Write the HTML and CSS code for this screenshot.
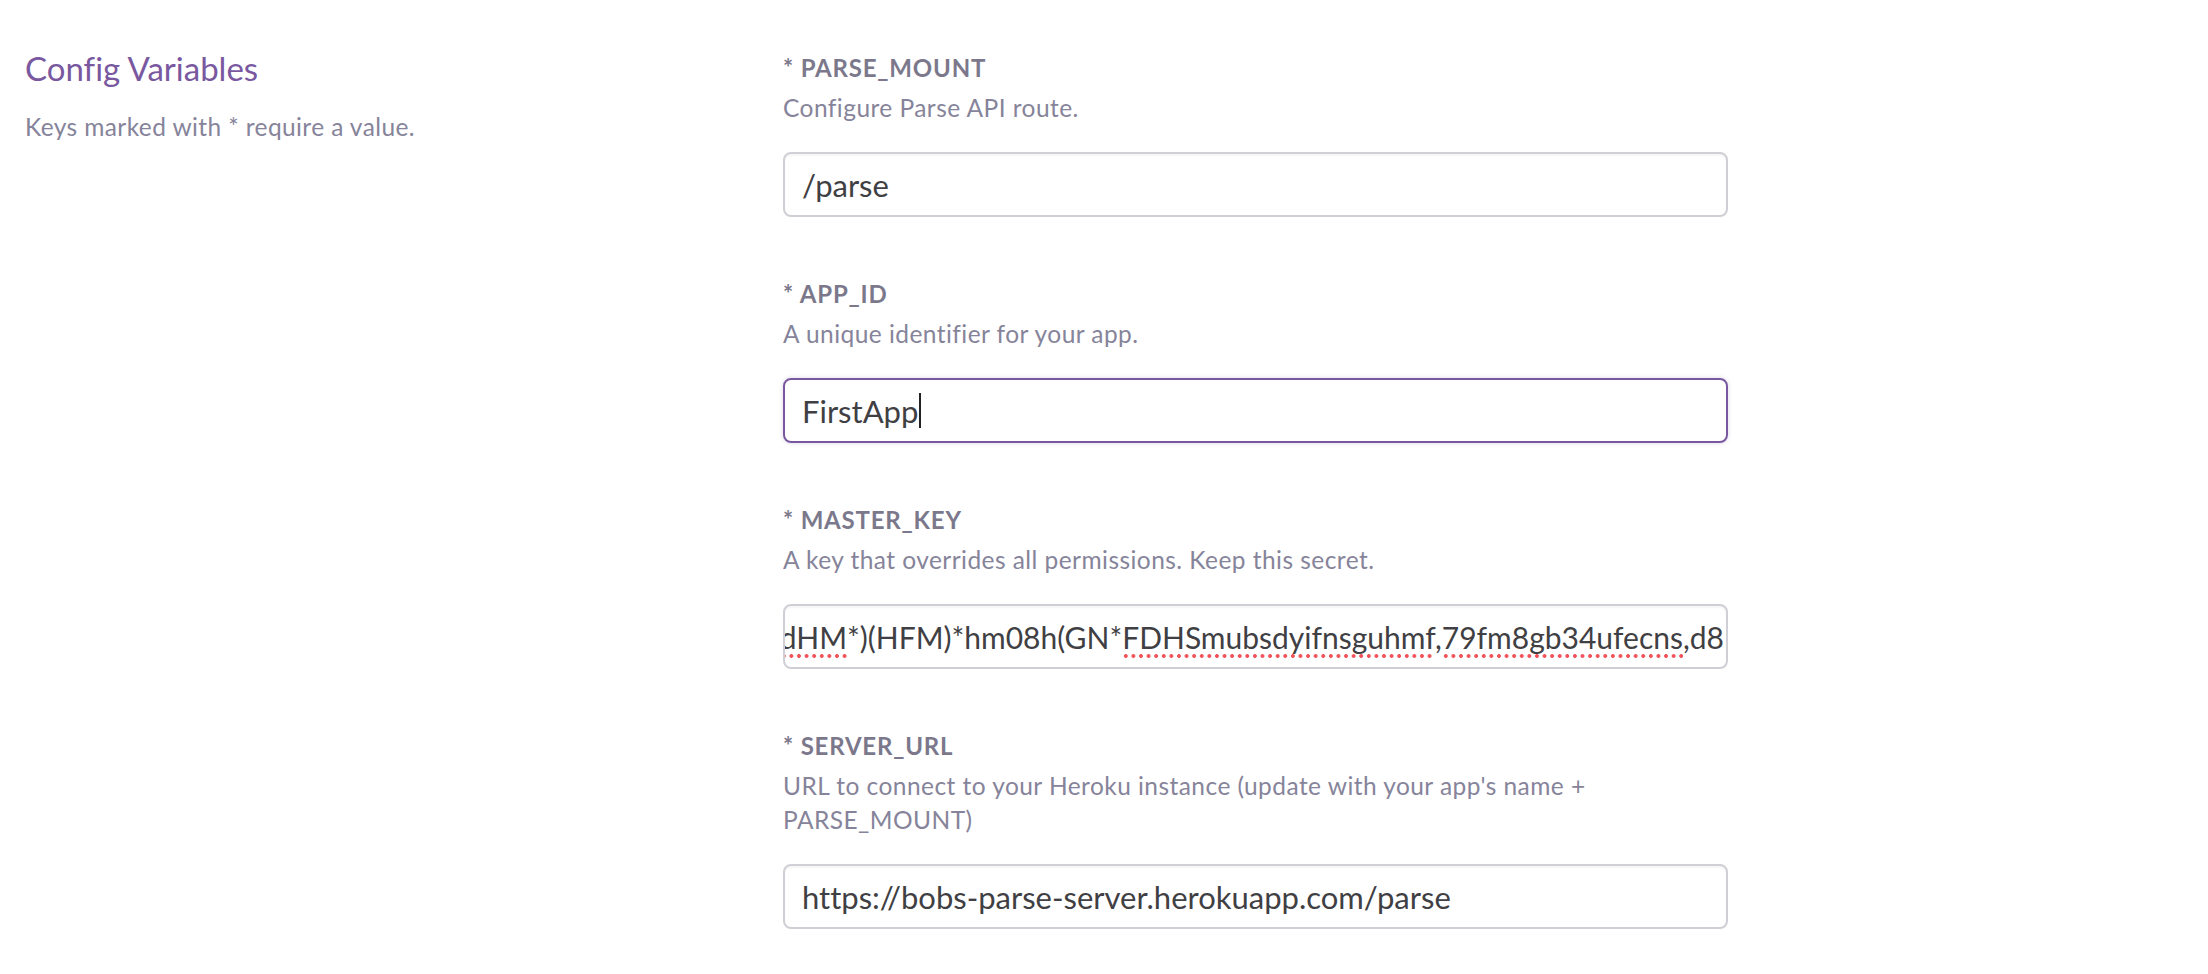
FILE: index.html
```html
<!DOCTYPE html>
<html lang="en">
<head>
<meta charset="utf-8">
<title>Config Variables</title>
<link rel="stylesheet" href="styles.css">
</head>
<body>
<div class="page">
  <aside class="intro">
    <h2 class="intro-title">Config Variables</h2>
    <p class="intro-text">Keys marked with * require a value.</p>
  </aside>
  <form class="fields">
    <div class="field">
      <div class="field-label">* PARSE_MOUNT</div>
      <p class="field-hint">Configure Parse API route.</p>
      <div class="text-input">/parse</div>
    </div>
    <div class="field">
      <div class="field-label">* APP_ID</div>
      <p class="field-hint">A unique identifier for your app.</p>
      <div class="text-input is-focused">FirstApp<span class="caret"></span></div>
    </div>
    <div class="field">
      <div class="field-label">* MASTER_KEY</div>
      <p class="field-hint">A key that overrides all permissions. Keep this secret.</p>
      <div class="text-input is-scrolled"><span class="value"><span class="misspelled">dHM</span>*)(HFM)*hm08h(GN*<span class="misspelled">FDHSmubsdyifnsguhmf</span>,<span class="misspelled">79fm8gb34ufecns</span>,d8</span></div>
    </div>
    <div class="field">
      <div class="field-label">* SERVER_URL</div>
      <p class="field-hint">URL to connect to your Heroku instance (update with your app's name + PARSE_MOUNT)</p>
      <div class="text-input">https://bobs-parse-server.herokuapp.com/parse</div>
    </div>
  </form>
</div>
</body>
</html>
```
FILE: styles.css
```css
* { box-sizing: border-box; }
html, body { margin: 0; padding: 0; background: #fff; }
body {
  font-family: Lato, "Liberation Sans", sans-serif;
  font-variant-ligatures: none;
  color: #3f3f44;
  overflow: hidden;
}
.page {
  display: flex;
  align-items: flex-start;
}
.intro {
  width: 783px;
  padding: 48px 0 0 25px;
}
.intro-title {
  margin: 0;
  font-size: 33px;
  line-height: 40px;
  font-weight: 400;
  color: #79589f;
}
.intro-text {
  margin: 22px 0 0;
  font-size: 24.5px;
  letter-spacing: 0.4px;
  line-height: 34px;
  color: #86849a;
}
.fields {
  width: 945px;
  padding-top: 51px;
}
.field { margin-bottom: 60px; }
.field-label {
  font-size: 24px;
  letter-spacing: 0.8px;
  line-height: 34px;
  font-weight: 700;
  color: #7b788c;
}
.field-hint {
  margin: 6px 0 27px;
  font-size: 24.5px;
  letter-spacing: 0.45px;
  line-height: 34px;
  color: #86849a;
}
.text-input {
  height: 65px;
  border: 2px solid #cfcfd6;
  border-radius: 8px;
  padding: 0 17px;
  display: flex;
  align-items: center;
  font-size: 31px;
  color: #3f3f44;
  white-space: nowrap;
  overflow: hidden;
  box-shadow: inset 0 2px 2px rgba(0,0,0,0.04);
}
.text-input.is-focused {
  border-color: #79589f;
  box-shadow: 0 0 4px rgba(121,88,159,0.25);
}
.caret {
  display: inline-block;
  width: 2px;
  height: 35px;
  background: #222;
  margin-left: 1px;
}
.text-input.is-scrolled {
  justify-content: flex-end;
  padding: 0 2px 0 0;
  font-size: 30px;
}
.misspelled {
  background-image: radial-gradient(circle, #f2545b 1.6px, transparent 2.2px);
  background-size: 7.6px 6px;
  background-repeat: repeat-x;
  background-position: 0 100%;
  padding-bottom: 4px;
}
```
